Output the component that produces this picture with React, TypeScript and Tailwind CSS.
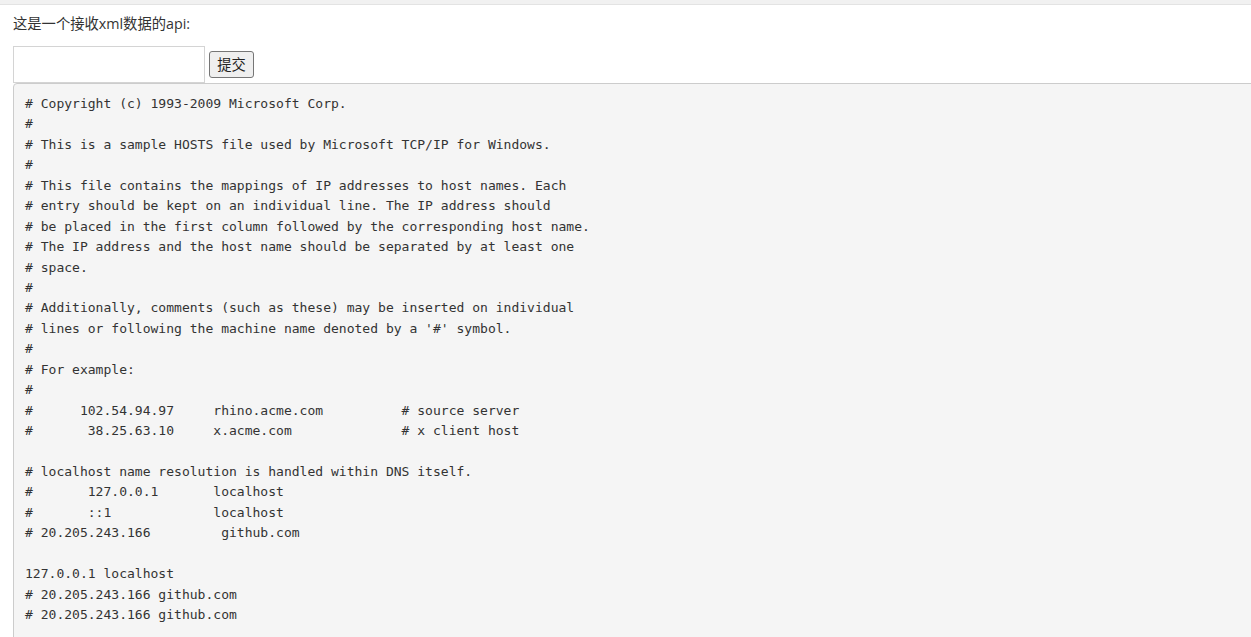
import React from 'react';

const HOSTS = `# Copyright (c) 1993-2009 Microsoft Corp.
#
# This is a sample HOSTS file used by Microsoft TCP/IP for Windows.
#
# This file contains the mappings of IP addresses to host names. Each
# entry should be kept on an individual line. The IP address should
# be placed in the first column followed by the corresponding host name.
# The IP address and the host name should be separated by at least one
# space.
#
# Additionally, comments (such as these) may be inserted on individual
# lines or following the machine name denoted by a '#' symbol.
#
# For example:
#
#      102.54.94.97     rhino.acme.com          # source server
#       38.25.63.10     x.acme.com              # x client host

# localhost name resolution is handled within DNS itself.
#       127.0.0.1       localhost
#       ::1             localhost
# 20.205.243.166         github.com

127.0.0.1 localhost
# 20.205.243.166 github.com
# 20.205.243.166 github.com
`;

export default function App() {
  return (
    <div className="h-[637px] w-[1251px] overflow-hidden bg-white text-[#333]">
      {/* top strip */}
      <div className="h-[5px] bg-[#f1f1f1] border-b border-[#e3e3e3]" />

      <div className="pl-[13px]">
        <p
          className="pt-[9px] text-[14.3px] leading-[20px] text-[#333]"
          style={{ fontFamily: '"Open Sans", "Noto Sans CJK SC", sans-serif' }}
        >
          这是一个接收xml数据的api:
        </p>

        <div className="flex items-start gap-[4px] mt-[12px]">
          <input
            type="text"
            className="w-[192px] h-[37px] border border-[#d4d4d4] bg-white outline-none"
          />
          <button
            type="button"
            className="mt-[5px] h-[27px] w-[45px] rounded-[3px] border border-[#767676] bg-[#efefef] text-[14.3px] text-[#222] leading-none"
            style={{ fontFamily: '"Noto Sans CJK SC", sans-serif' }}
          >
            提交
          </button>
        </div>

        <pre
          className="w-[1300px] h-[600px] rounded-[4px] border border-[#ccc] bg-[#f5f5f5] pl-[11px] pt-[10px] text-[13.04px] leading-[20.43px] text-[#333] whitespace-pre"
          style={{ fontFamily: '"DejaVu Sans Mono", monospace' }}
        >
          {HOSTS}
        </pre>
      </div>
    </div>
  );
}
